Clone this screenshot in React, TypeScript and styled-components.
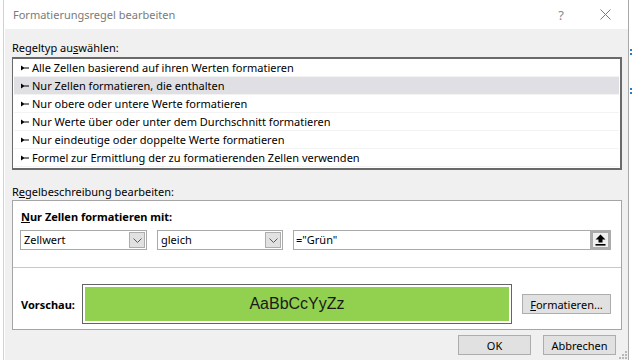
import React from "react";
import styled, { createGlobalStyle } from "styled-components";

const GlobalStyle = createGlobalStyle`
  html, body {
    margin: 0;
    padding: 0;
    background: #ffffff;
    overflow: hidden;
  }
  body {
    font-family: "Noto Sans", "Open Sans", sans-serif;
    font-size: 11px;
    color: #000000;
  }
`;

const ruleTypes = [
  "Alle Zellen basierend auf ihren Werten formatieren",
  "Nur Zellen formatieren, die enthalten",
  "Nur obere oder untere Werte formatieren",
  "Nur Werte über oder unter dem Durchschnitt formatieren",
  "Nur eindeutige oder doppelte Werte formatieren",
  "Formel zur Ermittlung der zu formatierenden Zellen verwenden",
];

const Pointer = () => (
  <svg width="8" height="6" viewBox="0 0 8 6">
    <path d="M0 0.5 L3 2.5 L8 2.5 L8 3.5 L3 3.5 L0 5.5 Z" fill="#000" />
  </svg>
);

const Chevron = () => (
  <svg width="9" height="5" viewBox="0 0 9 5">
    <path d="M0.5 0.5 L4.5 4.5 L8.5 0.5" fill="none" stroke="#5a5a5a" strokeWidth="1" />
  </svg>
);

const UploadIcon = () => (
  <svg width="11" height="12" viewBox="0 0 11 12">
    <path d="M5.5 0.5 L10.5 5.5 L7.5 5.5 L7.5 8.5 L3.5 8.5 L3.5 5.5 L0.5 5.5 Z" fill="#000" />
    <rect x="0.5" y="10" width="10" height="1.6" fill="#000" />
  </svg>
);

const Grip = () => (
  <svg width="8" height="8" viewBox="0 0 8 8">
    <rect x="6" y="0" width="2" height="2" fill="#b8b8b8" />
    <rect x="3" y="3" width="2" height="2" fill="#b8b8b8" />
    <rect x="6" y="3" width="2" height="2" fill="#b8b8b8" />
    <rect x="0" y="6" width="2" height="2" fill="#b8b8b8" />
    <rect x="3" y="6" width="2" height="2" fill="#b8b8b8" />
    <rect x="6" y="6" width="2" height="2" fill="#b8b8b8" />
  </svg>
);

const Dropdown = ({ value, width }: { value: string; width: number }) => (
  <Select $width={width}>
    <SelectValue>{value}</SelectValue>
    <SelectButton>
      <Chevron />
    </SelectButton>
  </Select>
);

const App = () => {
  return (
    <>
      <GlobalStyle />
      <Screen>
        <SheetEdge />
        <Dialog>
          <TitleBar>
            <Title>Formatierungsregel bearbeiten</Title>
            <TitleButtons>
              <HelpGlyph>?</HelpGlyph>
              <svg width="11" height="11" viewBox="0 0 11 11">
                <path d="M0.5 0.5 L10.5 10.5 M10.5 0.5 L0.5 10.5" stroke="#7a7a7a" strokeWidth="1" />
              </svg>
            </TitleButtons>
          </TitleBar>
          <Body>
            <SectionLabel>
              Regeltyp au<Key>s</Key>wählen:
            </SectionLabel>
            <RuleList>
              {ruleTypes.map((t, i) => (
                <RuleRow key={t} $selected={i === 1}>
                  <Pointer />
                  <span>{t}</span>
                </RuleRow>
              ))}
            </RuleList>
            <SectionLabel $gap={14}>
              R<Key>e</Key>gelbeschreibung bearbeiten:
            </SectionLabel>
            <DescBox>
              <ConditionArea>
                <BoldLabel>
                  <Key>N</Key>ur Zellen formatieren mit:
                </BoldLabel>
                <ControlRow>
                  <Dropdown value="Zellwert" width={127} />
                  <Dropdown value="gleich" width={126} />
                  <RefInput>
                    <RefValue>="Grün"</RefValue>
                    <RefButton>
                      <UploadIcon />
                    </RefButton>
                  </RefInput>
                </ControlRow>
              </ConditionArea>
              <Divider />
              <PreviewArea>
                <PreviewLabel>Vorschau:</PreviewLabel>
                <PreviewFrame>
                  <PreviewFill>AaBbCcYyZz</PreviewFill>
                </PreviewFrame>
                <PushButton $width={89}>
                  <Key>F</Key>ormatieren...
                </PushButton>
              </PreviewArea>
            </DescBox>
            <ButtonBar>
              <PushButton $width={73}>OK</PushButton>
              <PushButton $width={73}>Abbrechen</PushButton>
            </ButtonBar>
          </Body>
          <GripCorner>
            <Grip />
          </GripCorner>
        </Dialog>
        <SheetRight>
          <BlueMark $top={49} />
          <BlueMark $top={88} />
        </SheetRight>
      </Screen>
    </>
  );
};

export default App;

const Screen = styled.div`
  display: flex;
  width: 632px;
  height: 360px;
  overflow: hidden;
`;

const SheetEdge = styled.div`
  width: 5px;
  flex-shrink: 0;
  background:
    linear-gradient(to right, transparent 3px, #d2d2d2 3px, #d2d2d2 4px, transparent 4px),
    repeating-linear-gradient(to bottom, transparent 0, transparent 20px, #dcdcdc 20px, #dcdcdc 21px),
    #ffffff;
  background-size: 100% 100%, 100% 20px, auto;
  background-position: 0 0, 0 0.5px, 0 0;
`;

const SheetRight = styled.div`
  position: relative;
  width: 3px;
  flex-shrink: 0;
  background: #ffffff;
`;

const BlueMark = styled.div<{ $top: number }>`
  position: absolute;
  left: 1px;
  top: ${(p) => p.$top}px;
  width: 2px;
  height: 6px;
  border-top: 2px solid #2b79c2;
  border-bottom: 2px solid #2b79c2;
  box-sizing: border-box;
`;

const Dialog = styled.div`
  position: relative;
  flex: 1;
  display: flex;
  flex-direction: column;
  background: #f0f0f0;
  border-right: 1px solid #a8a8a8;
`;

const TitleBar = styled.div`
  height: 29px;
  flex-shrink: 0;
  display: flex;
  align-items: center;
  justify-content: space-between;
  background: #ffffff;
  padding: 0 17px 0 8px;
`;

const Title = styled.div`
  color: #7a7a7a;
  font-size: 11px;
`;

const TitleButtons = styled.div`
  display: flex;
  align-items: center;
  gap: 36px;
`;

const HelpGlyph = styled.span`
  color: #8a8a8a;
  font-size: 13px;
`;

const Body = styled.div`
  display: flex;
  flex-direction: column;
  padding: 0 6px 0 7px;
`;

const SectionLabel = styled.div<{ $gap?: number }>`
  margin-top: ${(p) => p.$gap ?? 11}px;
  line-height: 16px;
  height: 16px;
`;

const Key = styled.span`
  text-decoration: underline;
  text-underline-offset: 1px;
`;

const RuleList = styled.div`
  margin-top: 1px;
  height: 113px;
  box-sizing: border-box;
  border: 2px solid #6a6a6a;
  border-left-width: 1px;
  background: #ffffff;
  padding: 0 1px;
`;

const RuleRow = styled.div<{ $selected: boolean }>`
  height: 18px;
  box-sizing: border-box;
  display: flex;
  align-items: center;
  gap: 3px;
  padding-left: 7px;
  background: ${(p) => (p.$selected ? "#e0e0e4" : "#ffffff")};
  border-bottom: 1px solid #f3f3f3;
`;

const DescBox = styled.div`
  height: 130px;
  box-sizing: border-box;
  border: 1px solid #a5a5a5;
  background: #ffffff;
  display: flex;
  flex-direction: column;
`;

const ConditionArea = styled.div`
  padding: 8px 10px 0 7px;
  height: 66px;
  box-sizing: border-box;
`;

const BoldLabel = styled.div`
  font-weight: 700;
  line-height: 16px;
  margin-left: 1px;
`;

const ControlRow = styled.div`
  display: flex;
  gap: 10px;
  margin-top: 5px;
`;

const Select = styled.div<{ $width: number }>`
  width: ${(p) => p.$width}px;
  height: 20px;
  box-sizing: border-box;
  border: 1px solid #a9a9a9;
  display: flex;
  align-items: stretch;
  justify-content: space-between;
  padding: 1px;
`;

const SelectValue = styled.div`
  padding-left: 2px;
  line-height: 16px;
`;

const SelectButton = styled.div`
  width: 16px;
  box-sizing: border-box;
  background: #e1e1e1;
  border: 1px solid #adadad;
  display: flex;
  align-items: center;
  justify-content: center;
`;

const RefInput = styled.div`
  flex: 1;
  height: 20px;
  box-sizing: border-box;
  border: 1px solid #a9a9a9;
  border-right: none;
  display: flex;
  align-items: stretch;
  justify-content: space-between;
`;

const RefValue = styled.div`
  padding-left: 2px;
  line-height: 18px;
`;

const RefButton = styled.div`
  width: 21px;
  margin-top: -1px;
  height: 20px;
  box-sizing: border-box;
  border: 3px solid #acacac;
  background: #f0f0f0;
  display: flex;
  align-items: center;
  justify-content: center;
`;

const Divider = styled.div`
  height: 1px;
  background: #c8c8c8;
`;

const PreviewArea = styled.div`
  flex: 1;
  display: flex;
  align-items: center;
  padding: 16px 10px 5px 8px;
  box-sizing: border-box;
`;

const PreviewLabel = styled.div`
  width: 61px;
  font-weight: 700;
`;

const PreviewFrame = styled.div`
  width: 430px;
  height: 40px;
  box-sizing: border-box;
  border: 1px solid #646464;
  padding: 2px;
  margin-right: 10px;
`;

const PreviewFill = styled.div`
  height: 100%;
  background: #92d050;
  display: flex;
  align-items: center;
  justify-content: center;
  font-family: "Liberation Sans", Arial, sans-serif;
  font-size: 16px;
  color: #1a1a1a;
`;

const PushButton = styled.div<{ $width: number }>`
  width: ${(p) => p.$width}px;
  height: 20px;
  box-sizing: border-box;
  border: 1px solid #adadad;
  background: #e1e1e1;
  display: flex;
  align-items: center;
  justify-content: center;
`;

const ButtonBar = styled.div`
  display: flex;
  justify-content: flex-end;
  gap: 12px;
  margin-top: 5px;
  padding-right: 6px;
`;

const GripCorner = styled.div`
  position: absolute;
  right: 1px;
  bottom: 1px;
  display: flex;
`;
